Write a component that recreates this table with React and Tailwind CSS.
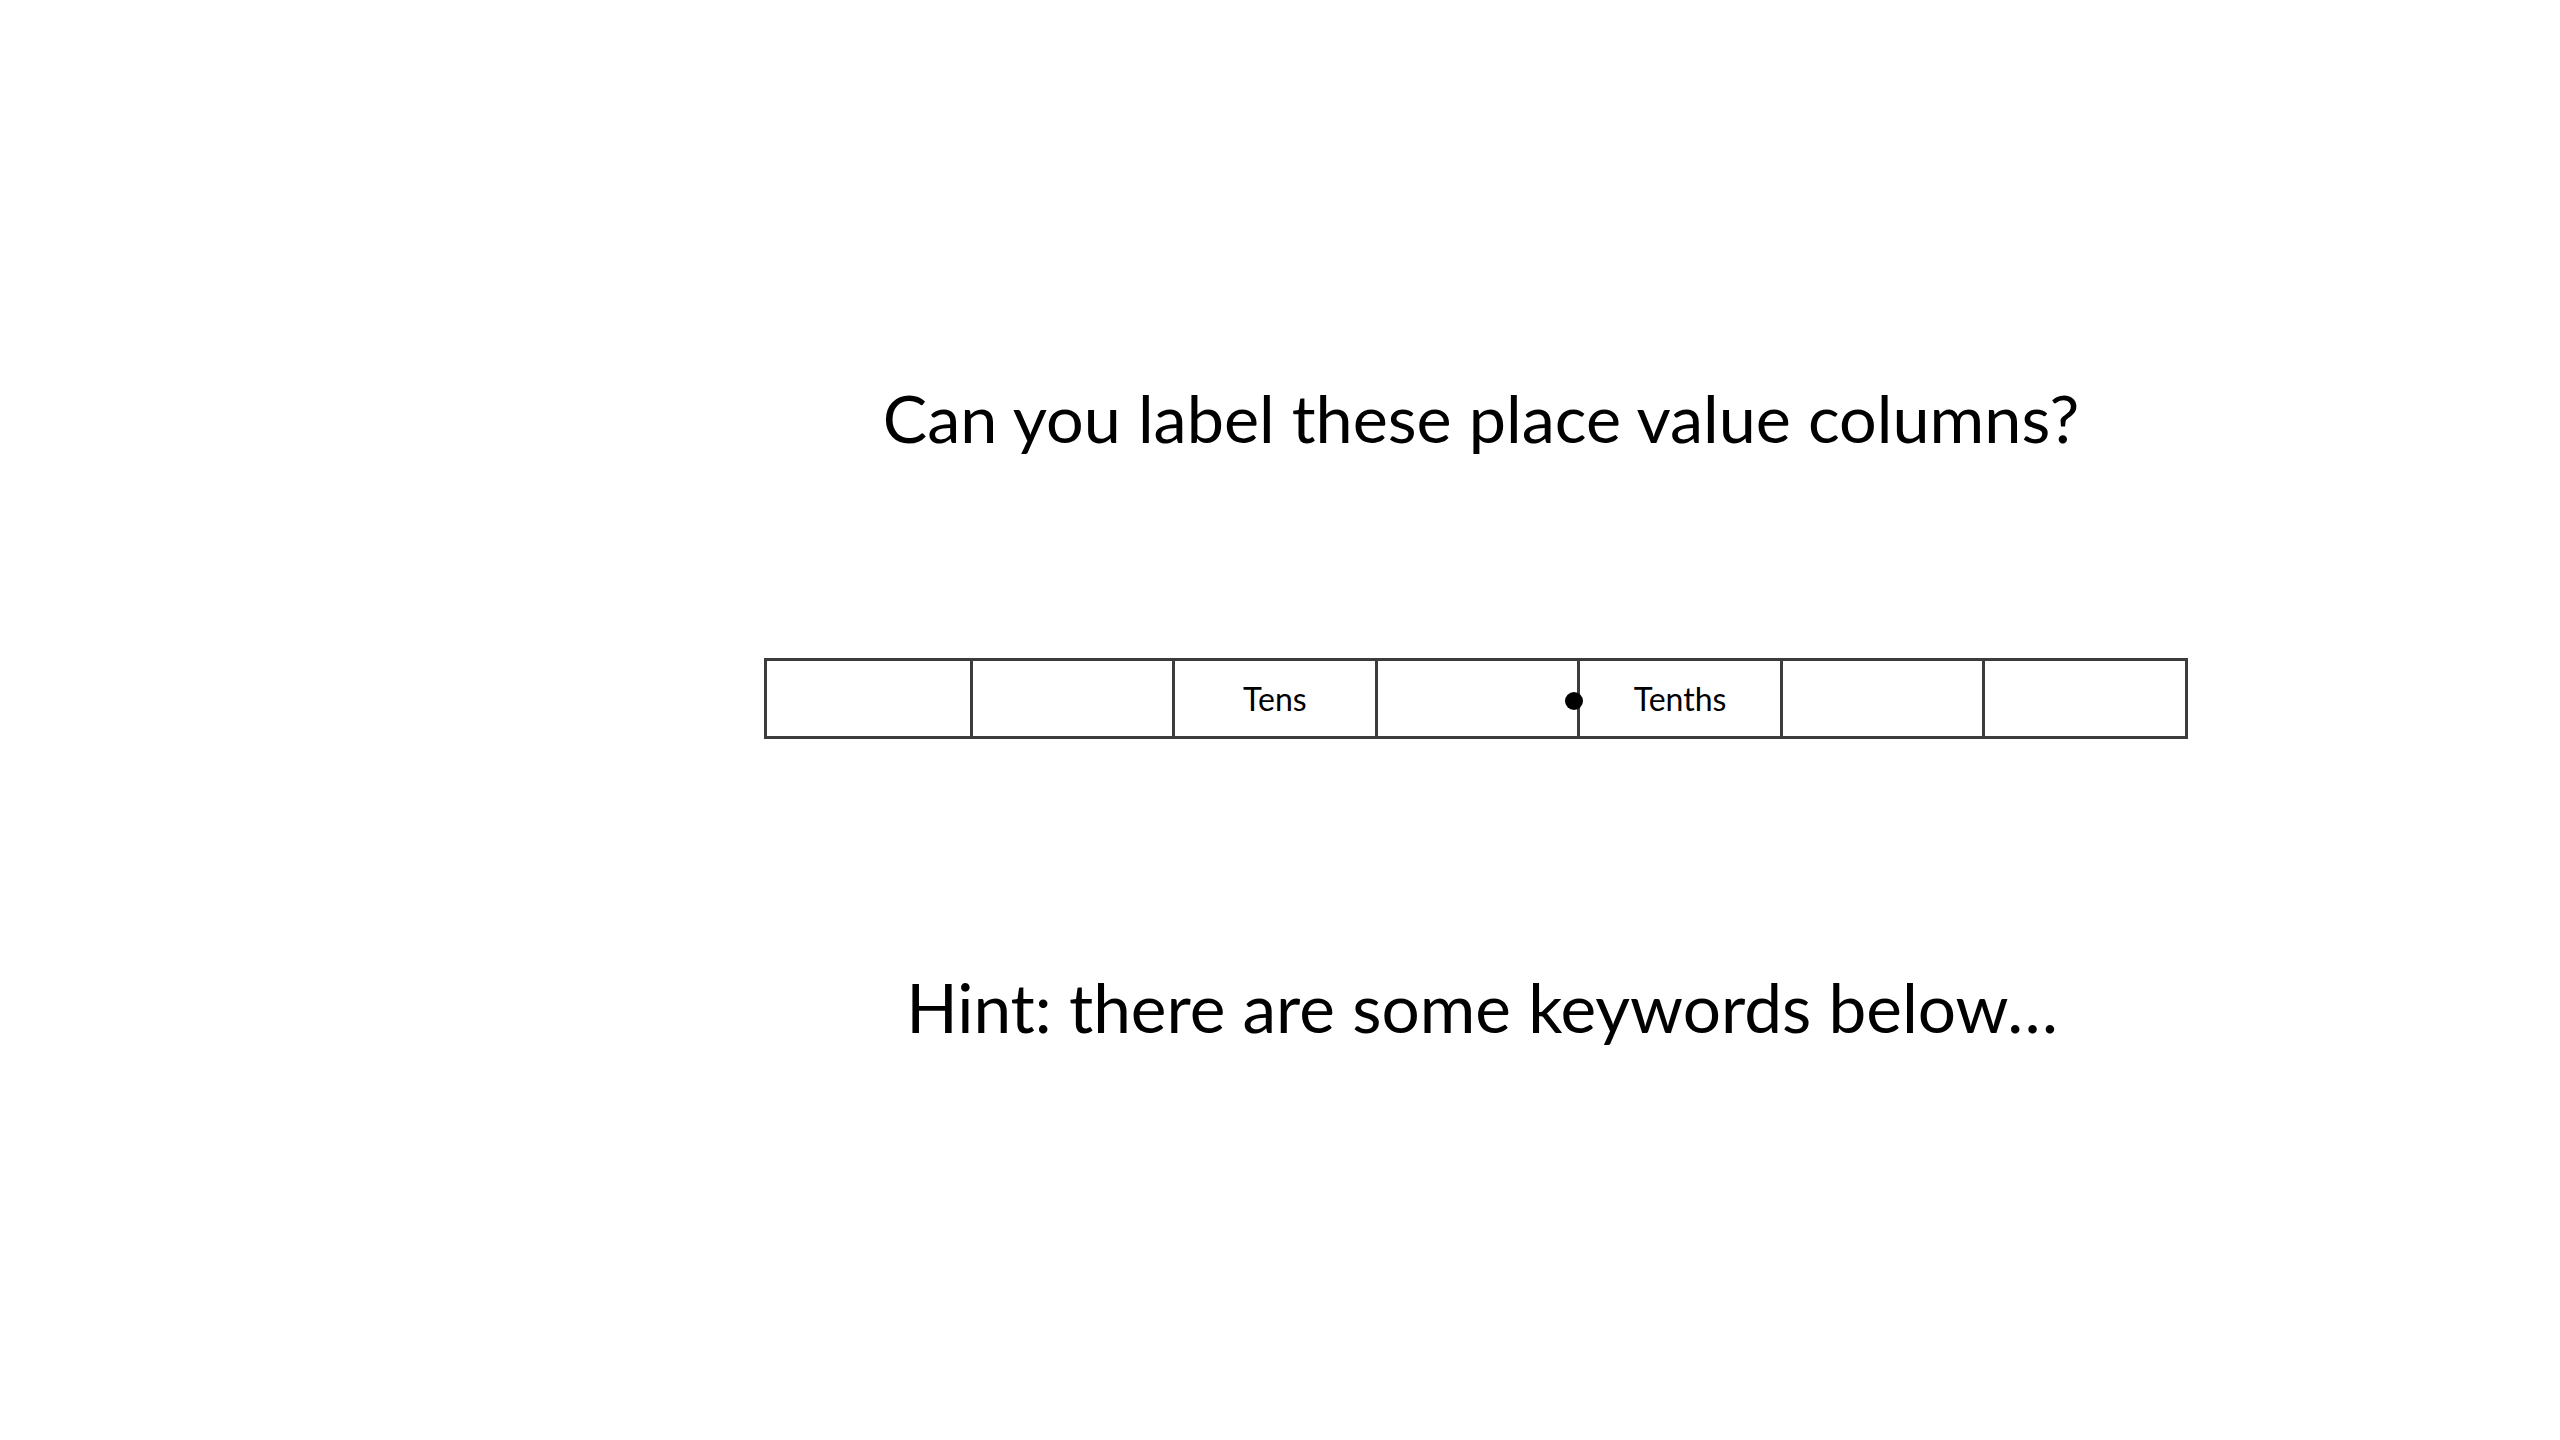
const columns = ['', '', 'Tens', '', 'Tenths', '', ''];

export default function App() {
  return (
    <div
      className="min-h-[1440px] w-full bg-white text-black"
      style={{ fontFamily: 'Lato, "Liberation Sans", sans-serif' }}
    >
      <div className="ml-[764px] flex w-[1424px] flex-col items-center pt-[384px]">
        <h1 className="ml-[10px] whitespace-nowrap text-[66.5px] font-normal leading-[66px]">
          Can you label these place value columns?
        </h1>

        {/* place value grid */}
        <div className="relative mt-[208px] grid h-[81px] w-[1424px] grid-cols-7 border-[3px] border-[#3c3c3c]">
          {columns.map((label, i) => (
            <div
              key={i}
              className={`flex items-center justify-center text-[32px] leading-none ${
                i > 0 ? 'border-l-[3px] border-[#3c3c3c]' : ''
              }`}
            >
              {label}
            </div>
          ))}
          {/* decimal point */}
          <span className="absolute left-[798px] top-[31px] h-[18px] w-[18px] rounded-full bg-black" />
        </div>

        <p className="ml-[12px] mt-[234px] whitespace-nowrap text-[67.5px] leading-[68px]">
          Hint: there are some keywords below…
        </p>
      </div>
    </div>
  );
}
